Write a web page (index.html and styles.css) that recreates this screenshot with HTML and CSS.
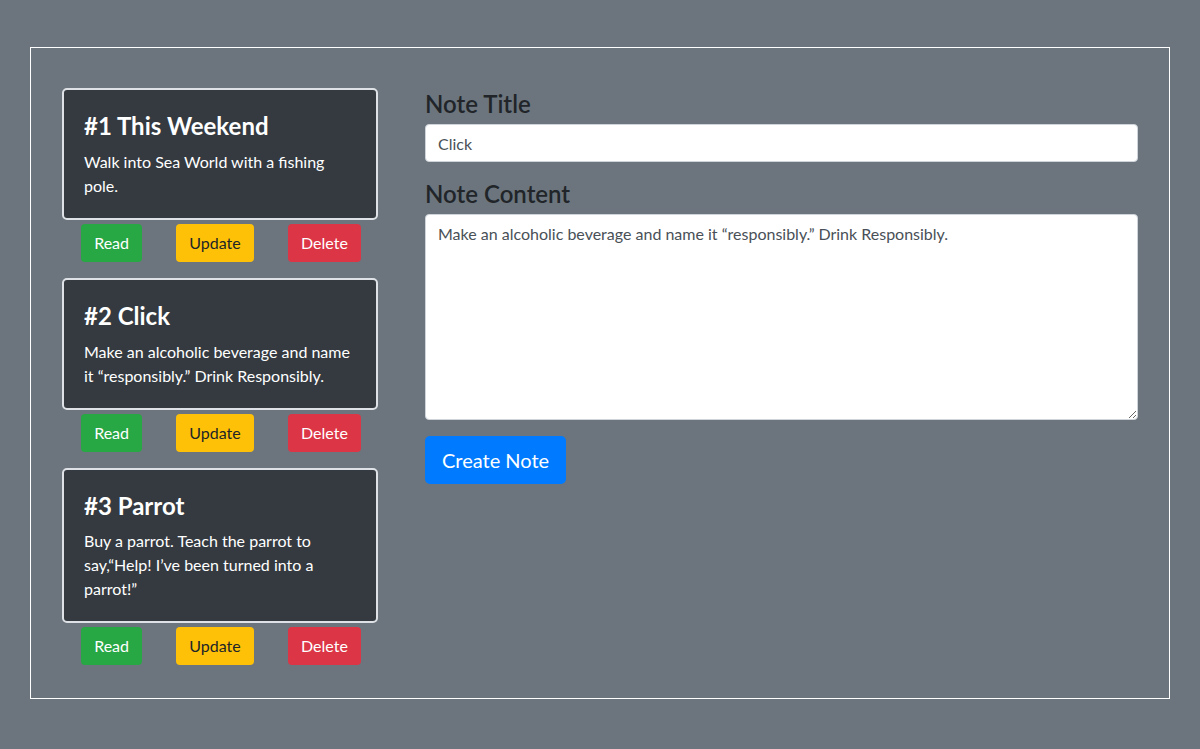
FILE: index.html
```html
<!DOCTYPE html>
<html>
<head>
<meta charset="utf-8">
<link rel="stylesheet" href="styles.css">
</head>
<body>
<div class="frame">
  <div class="notes">
    <div class="note">
      <div class="card">
        <h3 class="card-title">#1 This Weekend</h3>
        <p class="card-text">Walk into Sea World with a fishing pole.</p>
      </div>
      <div class="actions">
        <button class="btn btn-read">Read</button>
        <button class="btn btn-update">Update</button>
        <button class="btn btn-delete">Delete</button>
      </div>
    </div>
    <div class="note">
      <div class="card">
        <h3 class="card-title">#2 Click</h3>
        <p class="card-text">Make an alcoholic beverage and name it “responsibly.” Drink Responsibly.</p>
      </div>
      <div class="actions">
        <button class="btn btn-read">Read</button>
        <button class="btn btn-update">Update</button>
        <button class="btn btn-delete">Delete</button>
      </div>
    </div>
    <div class="note">
      <div class="card">
        <h3 class="card-title">#3 Parrot</h3>
        <p class="card-text">Buy a parrot. Teach the parrot to say,“Help! I’ve been turned into a parrot!”</p>
      </div>
      <div class="actions">
        <button class="btn btn-read">Read</button>
        <button class="btn btn-update">Update</button>
        <button class="btn btn-delete">Delete</button>
      </div>
    </div>
  </div>
  <form class="editor">
    <label class="label" for="title">Note Title</label>
    <input class="field" id="title" type="text" value="Click">
    <label class="label" for="content">Note Content</label>
    <textarea class="field area" id="content">Make an alcoholic beverage and name it “responsibly.” Drink Responsibly.</textarea>
    <div><button type="button" class="btn-create">Create Note</button></div>
  </form>
</div>
</body>
</html>
```

FILE: styles.css
```css
* { box-sizing: border-box; }
html, body { margin: 0; }
body {
  background: #6c757d;
  font-family: Lato, "Open Sans", sans-serif;
  font-size: 16px;
  line-height: 1.5;
  color: #212529;
}
.frame {
  width: 1140px;
  height: 652px;
  margin: 47px auto 0;
  border: 1px solid #fff;
  padding: 40px 31px 32px;
  display: flex;
  gap: 47px;
}
.notes {
  width: 316px;
  flex: none;
  display: flex;
  flex-direction: column;
  gap: 16px;
}
.card {
  background: #343a40;
  border: 2px solid #dee2e6;
  border-radius: 5px;
  padding: 22px 20px 20px;
  color: #fff;
}
.card-title {
  margin: 0 0 9px;
  font-size: 24px;
  font-weight: 700;
  line-height: 1.2;
}
.card-text { margin: 0; }
.actions {
  display: flex;
  justify-content: space-around;
  margin-top: 4px;
  padding-left: 2px;
}
.btn {
  font: inherit;
  border: none;
  border-radius: 4px;
  height: 38px;
  padding: 0 13px;
  color: #fff;
}
.btn-read { background: #28a745; }
.btn-update { background: #ffc107; color: #212529; }
.btn-delete { background: #dc3545; }
.editor {
  flex: 1;
  display: flex;
  flex-direction: column;
}
.label {
  font-size: 24px;
  font-weight: 600;
  line-height: 1.2;
  margin-bottom: 5px;
  margin-top: 2px;
}
.field {
  font: inherit;
  color: #495057;
  background: #fff;
  border: 1px solid #ced4da;
  border-radius: 4px;
  height: 38px;
  padding: 7px 12px 5px;
  margin-bottom: 16px;
}
.area {
  height: 206px;
  resize: vertical;
  margin-bottom: 16px;
}
.btn-create {
  font: inherit;
  font-size: 20px;
  color: #fff;
  background: #007bff;
  border: none;
  border-radius: 5px;
  height: 48px;
  padding: 0 17px;
}
```
